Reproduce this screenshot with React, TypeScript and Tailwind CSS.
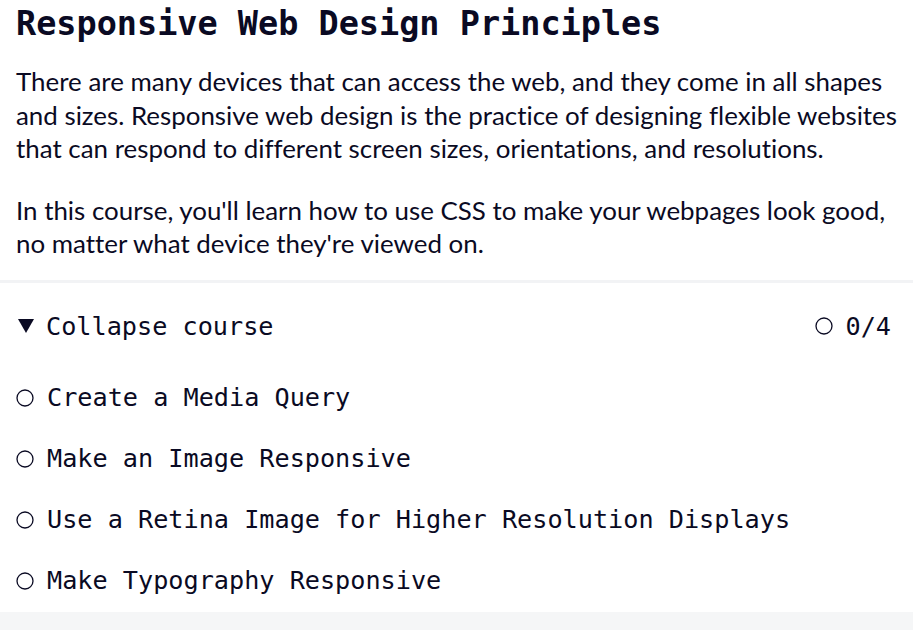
const lessons = [
  'Create a Media Query',
  'Make an Image Responsive',
  'Use a Retina Image for Higher Resolution Displays',
  'Make Typography Responsive',
];

function Circle() {
  return (
    <svg width="18" height="18" viewBox="0 0 18 18" className="shrink-0">
      <circle cx="9" cy="9" r="8" fill="none" stroke="#0a0a23" strokeWidth="1.3" />
    </svg>
  );
}

export default function App() {
  return (
    <div className="flex min-h-[630px] flex-col bg-white text-[#0a0a23]">
      <div className="pl-4 pr-[12px] pb-[19px]">
        <h2 className="pt-[4px] font-['DejaVu_Sans_Mono',monospace] text-[33.5px] font-bold leading-[40px]">
          Responsive Web Design Principles
        </h2>
        <div className="mt-[21px] font-['Lato','Noto_Sans',sans-serif] text-[25.9px] leading-[33.5px] [font-variant-ligatures:no-common-ligatures]">
          <p>
            There are many devices that can access the web, and they come in all shapes and sizes. Responsive web
            design is the practice of designing flexible websites that can respond to different screen sizes,
            orientations, and resolutions.
          </p>
          <p className="mt-[28px]">
            In this course, you'll learn how to use CSS to make your webpages look good, no matter what device
            they're viewed on.
          </p>
        </div>
      </div>
      <div className="h-[3px] bg-[#f2f3f5]" />
      <div className="font-['DejaVu_Sans_Mono',monospace] text-[25.2px]">
        <button className="flex w-full items-center justify-between pl-[18px] pr-[22px] pt-[25px] pb-[22px] text-left">
          <span className="flex items-center gap-[12px]">
            <svg width="16" height="14" viewBox="0 0 16 14" className="shrink-0">
              <polygon points="0,0 16,0 8,14" fill="#0a0a23" />
            </svg>
            <span>Collapse course</span>
          </span>
          <span className="flex items-center gap-[13px]">
            <Circle />
            <span>0/4</span>
          </span>
        </button>
        <ul className="pb-[1px]">
          {lessons.map(l => (
            <li key={l} className="flex h-[61px] items-center gap-[13px] pl-4">
              <Circle />
              <span>{l}</span>
            </li>
          ))}
        </ul>
      </div>
      <div className="flex-1 bg-[#f5f6f7]" />
    </div>
  );
}
